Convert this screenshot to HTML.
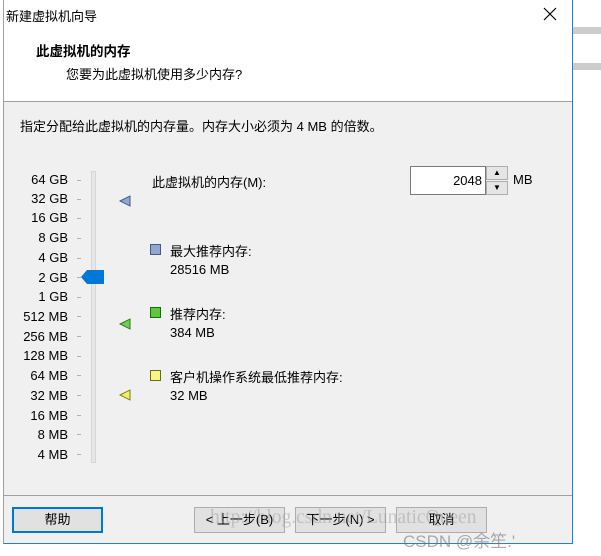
<!DOCTYPE html>
<html><head><meta charset="utf-8"><style>
*{margin:0;padding:0;box-sizing:border-box}
body{width:601px;height:556px;background:#fff;position:relative;overflow:hidden;font-family:"Liberation Sans","Noto Sans CJK SC",sans-serif;font-size:13px;color:#000}
.a{position:absolute;white-space:nowrap}
.win{position:absolute;left:3px;top:0;width:570px;height:544px;border-left:1px solid #a0a0a0;border-right:1px solid #1883d7;border-bottom:1px solid #1883d7;background:#f0f0f0}
.hdr{position:absolute;left:0;top:0;width:568px;height:102px;background:#fff;border-bottom:1px solid #a0a0a0}
.lbl{position:absolute;right:533px;width:60px;text-align:right;font-size:13px}
.tick{position:absolute;left:77px;width:4px;height:1px;background:#b0b0b0}
.btn{position:absolute;top:507px;height:26px;width:91px;border:1px solid #adadad;background:#e1e1e1;text-align:center;line-height:24px;font-size:13px}
</style></head><body>
<div class="a" style="left:572px;top:27px;width:29px;height:7px;background:#ccc"></div>
<div class="a" style="left:572px;top:63px;width:29px;height:7px;background:#ccc"></div>
<div class="win">
<div class="hdr"></div>
<div class="a" style="left:0;top:495px;width:568px;height:1px;background:#a0a0a0"></div>
</div>
<div class="a" style="left:6px;top:6px;font-size:13px">新建虚拟机向导</div>
<svg class="a" style="left:543px;top:7px" width="14" height="14"><path d="M1 1L13 13M13 1L1 13" stroke="#000" stroke-width="1.2"/></svg>
<div class="a" style="left:36px;top:40px;font-weight:bold;font-size:13.5px">此虚拟机的内存</div>
<div class="a" style="left:66px;top:64px">您要为此虚拟机使用多少内存?</div>
<div class="a" style="left:20px;top:116px">指定分配给此虚拟机的内存量。内存大小必须为 4 MB 的倍数。</div>
<div class="lbl" style="top:172px">64 GB</div><div class="lbl" style="top:191px">32 GB</div><div class="lbl" style="top:210px">16 GB</div><div class="lbl" style="top:230px">8 GB</div><div class="lbl" style="top:250px">4 GB</div><div class="lbl" style="top:270px">2 GB</div><div class="lbl" style="top:289px">1 GB</div><div class="lbl" style="top:309px">512 MB</div><div class="lbl" style="top:329px">256 MB</div><div class="lbl" style="top:348px">128 MB</div><div class="lbl" style="top:368px">64 MB</div><div class="lbl" style="top:388px">32 MB</div><div class="lbl" style="top:408px">16 MB</div><div class="lbl" style="top:427px">8 MB</div><div class="lbl" style="top:447px">4 MB</div>
<div class="tick" style="top:180px"></div><div class="tick" style="top:199px"></div><div class="tick" style="top:218px"></div><div class="tick" style="top:238px"></div><div class="tick" style="top:258px"></div><div class="tick" style="top:277px"></div><div class="tick" style="top:297px"></div><div class="tick" style="top:316px"></div><div class="tick" style="top:336px"></div><div class="tick" style="top:356px"></div><div class="tick" style="top:375px"></div><div class="tick" style="top:395px"></div><div class="tick" style="top:415px"></div><div class="tick" style="top:434px"></div><div class="tick" style="top:454px"></div>
<div class="a" style="left:91px;top:171px;width:5px;height:292px;background:#e7e7e7;border:1px solid #d6d6d6"></div>
<svg class="a" style="left:81px;top:270px" width="24" height="14"><path d="M0 7L6 0H23V14H6Z" fill="#0078d7"/></svg>
<svg class="a" style="left:119px;top:195px" width="12" height="12"><path d="M1 6L11 1V11Z" fill="#8fa8cc" stroke="#3c5a8a"/></svg>
<svg class="a" style="left:119px;top:318px" width="12" height="12"><path d="M1 6L11 1V11Z" fill="#6cd04c" stroke="#2a7a1a"/></svg>
<svg class="a" style="left:119px;top:389px" width="12" height="12"><path d="M1 6L11 1V11Z" fill="#f0f060" stroke="#7a7a20"/></svg>
<div class="a" style="left:152px;top:172px">此虚拟机的内存(M):</div>
<div class="a" style="left:410px;top:166px;width:76px;height:29px;border:1px solid #7a7a7a;background:#fff;text-align:right;padding-right:3px;line-height:27px">2048</div>
<div class="a" style="left:486px;top:166px;width:22px;height:14px;border:1px solid #adadad;background:#e5e5e5;font-size:8px;text-align:center;line-height:12px">▲</div>
<div class="a" style="left:486px;top:181px;width:22px;height:14px;border:1px solid #adadad;background:#e5e5e5;font-size:8px;text-align:center;line-height:12px">▼</div>
<div class="a" style="left:513px;top:172px">MB</div>
<div class="a" style="left:150px;top:244px;width:11px;height:11px;background:#8fa8cc;border:1px solid #3c5a8a"></div>
<div class="a" style="left:170px;top:241px">最大推荐内存:</div>
<div class="a" style="left:170px;top:262px">28516 MB</div>
<div class="a" style="left:150px;top:307px;width:11px;height:11px;background:#5cc83c;border:1px solid #1a6a10"></div>
<div class="a" style="left:170px;top:304px">推荐内存:</div>
<div class="a" style="left:170px;top:325px">384 MB</div>
<div class="a" style="left:150px;top:370px;width:11px;height:11px;background:#f8f880;border:1px solid #6a6a20"></div>
<div class="a" style="left:170px;top:367px">客户机操作系统最低推荐内存:</div>
<div class="a" style="left:170px;top:388px">32 MB</div>
<div class="btn" style="left:12px;width:91px;border:2px solid #0078d7;line-height:22px">帮助</div>
<div class="btn" style="left:194px">&lt; 上一步(B)</div>
<div class="btn" style="left:295px">下一步(N) &gt;</div>
<div class="btn" style="left:396px">取消</div>
<div class="a" style="left:210px;top:507px;font-family:'Liberation Serif',serif;font-size:19.5px;color:rgba(150,150,150,0.45)">http://blog.csdn.net/LunaticQueen</div>
<div class="a" style="left:403px;top:527px;font-size:17px;color:rgba(120,120,120,0.6)">CSDN @余笙.'</div>
</body></html>
